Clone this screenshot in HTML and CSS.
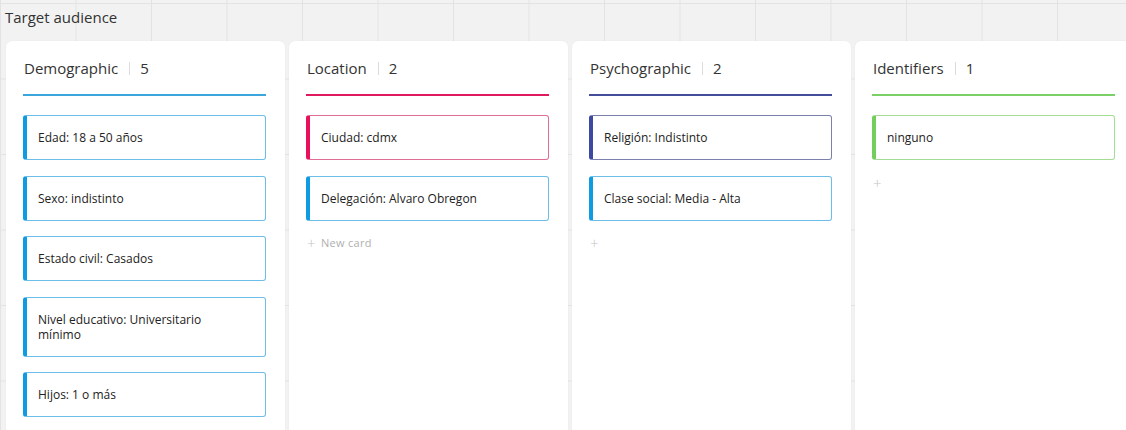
FILE: index.html
```html
<!DOCTYPE html>
<html lang="es">
<head>
<meta charset="utf-8">
<title>Target audience</title>
<link rel="stylesheet" href="styles.css">
</head>
<body>
<div class="board">
  <div class="board-title">Target audience</div>
  <div class="columns">
    <section class="column col-blue">
      <header class="col-head"><span class="col-name">Demographic</span><span class="sep"></span><span class="count">5</span></header>
      <div class="card card-blue">Edad: 18 a 50 años</div>
      <div class="card card-blue">Sexo: indistinto</div>
      <div class="card card-blue">Estado civil: Casados</div>
      <div class="card card-blue">Nivel educativo: Universitario mínimo</div>
      <div class="card card-blue">Hijos: 1 o más</div>
    </section>
    <section class="column col-pink">
      <header class="col-head"><span class="col-name">Location</span><span class="sep"></span><span class="count">2</span></header>
      <div class="card card-pink">Ciudad: cdmx</div>
      <div class="card card-blue">Delegación: Alvaro Obregon</div>
      <div class="add"><span class="plus">+</span><span class="add-text">New card</span></div>
    </section>
    <section class="column col-indigo">
      <header class="col-head"><span class="col-name">Psychographic</span><span class="sep"></span><span class="count">2</span></header>
      <div class="card card-indigo">Religión: Indistinto</div>
      <div class="card card-blue">Clase social: Media - Alta</div>
      <div class="add"><span class="plus">+</span></div>
    </section>
    <section class="column col-green">
      <header class="col-head"><span class="col-name">Identifiers</span><span class="sep"></span><span class="count">1</span></header>
      <div class="card card-green">ninguno</div>
      <div class="add"><span class="plus">+</span></div>
    </section>
  </div>
</div>
</body>
</html>
```

FILE: styles.css
```css
html, body {
  margin: 0;
  padding: 0;
  height: 100%;
  overflow: hidden;
}
body {
  font-family: "Open Sans", "Liberation Sans", sans-serif;
  color: #333;
  background-color: #f2f2f2;
  background-image:
    linear-gradient(to right, #e3e3e3 1px, transparent 1px),
    linear-gradient(to bottom, #e3e3e3 1px, transparent 1px);
  background-size: 75.5px 75.5px;
  background-position: 0 3px;
}
.board {
  display: flex;
  flex-direction: column;
}
.board-title {
  height: 41px;
  box-sizing: border-box;
  padding: 7px 0 0 5px;
  font-size: 15px;
  line-height: 20px;
  color: #333;
}
.columns {
  display: flex;
  gap: 4px;
  padding-left: 6px;
}
.column {
  flex: 0 0 279px;
  box-sizing: border-box;
  height: 400px;
  background: #fff;
  border-radius: 6px 6px 0 0;
  padding: 17px 19px 0 17px;
  box-shadow: 0 0 2px rgba(0,0,0,0.06);
}
.col-head {
  display: flex;
  align-items: center;
  height: 20px;
  padding: 0 0 16px 1px;
  margin-bottom: 19px;
  border-bottom: 2px solid;
}
.col-blue .col-head { border-color: #3aa6dc; }
.col-pink .col-head { border-color: #e0195f; }
.col-indigo .col-head { border-color: #444d9c; }
.col-green .col-head { border-color: #7bd066; }
.col-name {
  font-size: 15px;
  line-height: 20px;
  color: #333;
}
.sep {
  width: 1px;
  height: 13px;
  background: #dcdcdc;
  margin: 0 10px 0 11px;
}
.count {
  font-size: 15px;
  line-height: 20px;
  color: #333;
}
.card {
  box-sizing: border-box;
  border: 1px solid;
  border-left-width: 4px;
  border-radius: 3px;
  padding: 14px 30px 14px 11px;
  font-size: 12px;
  line-height: 15px;
  color: #222;
  margin-bottom: 15.5px;
  width: 243px;
}
.card-blue { border-color: #6cbde8; border-left-color: #0e9be2; }
.card-pink { border-color: #e06d95; border-left-color: #ea0f5b; }
.card-indigo { border-color: #7c80ae; border-left-color: #3d48a3; }
.card-green { border-color: #a4dc94; border-left-color: #72cf5c; }
.add {
  display: flex;
  align-items: center;
  height: 14px;
  margin-top: 0.5px;
  padding-left: 1px;
  color: #b0b0b0;
  font-size: 11px;
  line-height: 14px;
}
.plus {
  font-size: 15px;
  font-weight: 300;
  color: #c4c4c4;
  width: 14px;
}
.add-text {
  letter-spacing: 0.3px;
}
```
